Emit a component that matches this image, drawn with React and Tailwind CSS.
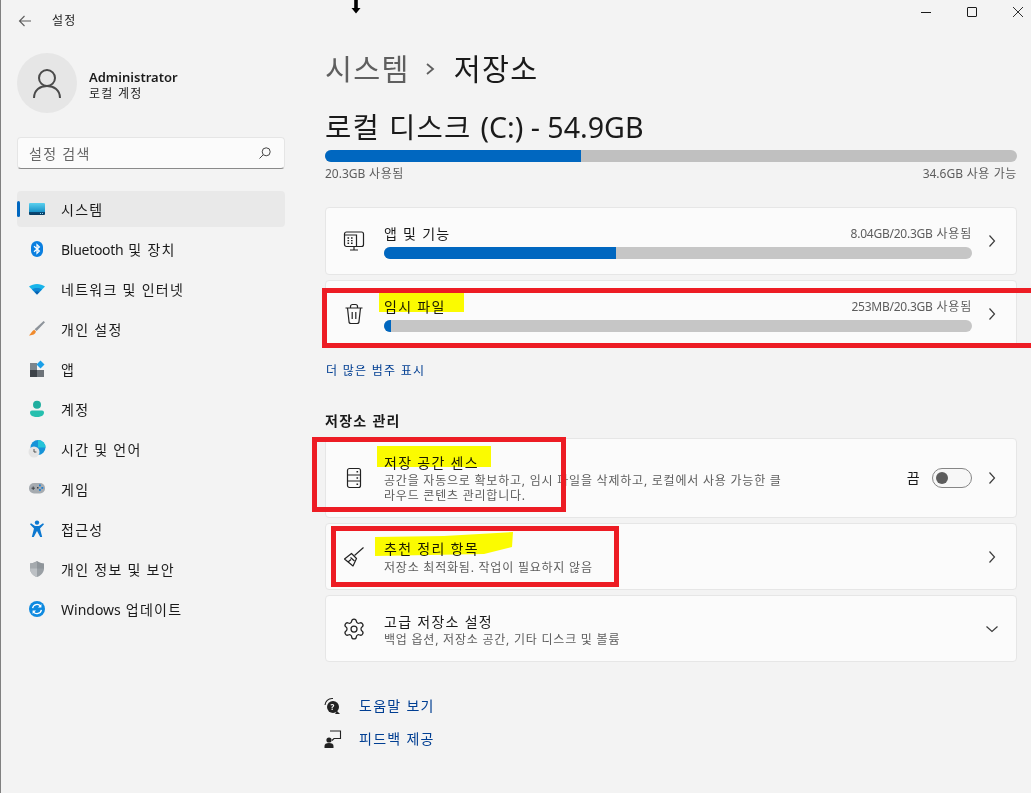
import React from 'react';
import { Settings } from 'lucide-react';

const Lat = ({ children, className = 'tracking-normal' }) => <span className={className}>{children}</span>;

const Chevron = ({ down }) => (
  <svg width="16" height="16" viewBox="0 0 16 16" fill="none" stroke="#3c3c3c" strokeWidth="1.2">
    {down ? <path d="M2.5 5.5 8 10.5l5.5-5" /> : <path d="M5.5 2.5 10.5 8l-5 5.5" />}
  </svg>
);

const SystemIcon = () => (
  <svg width="18" height="18" viewBox="0 0 18 18">
    <defs>
      <linearGradient id="sys" x1="0" y1="0" x2="0" y2="1">
        <stop offset="0" stopColor="#5ad0ee" />
        <stop offset="0.72" stopColor="#1a93c9" />
        <stop offset="0.73" stopColor="#0b4a78" />
        <stop offset="1" stopColor="#083a60" />
      </linearGradient>
    </defs>
    <rect x="1" y="3" width="16" height="12" rx="1" fill="url(#sys)" />
    <rect x="12" y="13" width="1" height="1" fill="#8fd8f0" />
    <rect x="14" y="13" width="1" height="1" fill="#8fd8f0" />
  </svg>
);

const BluetoothIcon = () => (
  <svg width="18" height="18" viewBox="0 0 18 18">
    <rect x="3" y="1" width="12" height="16" rx="6" fill="#0a7fe0" />
    <path d="M6 6.2 11.4 11 9 13.4V4.6L11.4 7 6 11.8" fill="none" stroke="#fff" strokeWidth="1.2" />
  </svg>
);

const WifiIcon = () => (
  <svg width="18" height="18" viewBox="0 0 18 18">
    <path d="M1 6.5C5.5 3 12.5 3 17 6.5L9 14.5Z" fill="#18b4ea" />
    <path d="M4 9.5C7 7.6 11 7.6 14 9.5L9 14.5Z" fill="#0e86d4" />
    <path d="M6.6 12C8 11.1 10 11.1 11.4 12L9 14.5Z" fill="#0b5fae" />
  </svg>
);

const BrushIcon = () => (
  <svg width="18" height="18" viewBox="0 0 18 18">
    <path d="M15.6 1 17 2.2 8.6 11 6.6 9.2Z" fill="#8d939a" />
    <path d="M6.2 9.8 8 11.6C7.4 14.4 4.4 15.6 1 15.4 3 14 3.6 11 6.2 9.8Z" fill="#f08a2c" />
  </svg>
);

const AppsIcon = () => (
  <svg width="18" height="18" viewBox="0 0 18 18">
    <rect x="2" y="3" width="7" height="7" fill="#7d858c" />
    <rect x="2" y="10" width="7" height="7" fill="#3d4248" />
    <rect x="9" y="10" width="7" height="7" fill="#6c7278" />
    <path d="M12.5 0.5 16.5 4.5 12.5 8.5 8.5 4.5Z" fill="#1a9fe8" />
  </svg>
);

const AccountIcon = () => (
  <svg width="18" height="18" viewBox="0 0 18 18">
    <circle cx="9" cy="4.8" r="4" fill="#1fae9f" />
    <path d="M2 12.5A2 2 0 0 1 4 10.5H14A2 2 0 0 1 16 12.5C16 15.5 13 17 9 17S2 15.5 2 12.5Z" fill="#26bfae" />
  </svg>
);

const TimeIcon = () => (
  <svg width="18" height="18" viewBox="0 0 18 18">
    <circle cx="10" cy="7.5" r="7.5" fill="#1593d8" />
    <path d="M10 0A7.5 7.5 0 0 1 17.5 7.5H10Z" fill="#25c4d8" />
    <circle cx="6" cy="12" r="5.5" fill="#e4e4e4" />
    <path d="M6 9v3h2.4" fill="none" stroke="#444" strokeWidth="0.9" />
  </svg>
);

const GameIcon = () => (
  <svg width="18" height="18" viewBox="0 0 18 18">
    <rect x="1" y="3" width="16" height="10.5" rx="5" fill="#a6abb0" />
    <path d="M3.5 8.2h3.4M5.2 6.5v3.4" stroke="#3d4248" strokeWidth="1" />
    <rect x="11" y="4.5" width="1.8" height="1.8" fill="#1a7fd4" />
    <rect x="13.4" y="7" width="1.8" height="1.8" fill="#1a7fd4" />
    <rect x="11" y="9" width="1.8" height="1.8" fill="#1a7fd4" />
    <rect x="9" y="7" width="1.5" height="1.5" fill="#3d4248" />
  </svg>
);

const AccessIcon = () => (
  <svg width="18" height="18" viewBox="0 0 18 18" fill="#0c78d0">
    <circle cx="9" cy="2.6" r="2.2" />
    <path d="M2 4.2 3 3.2 7 6H11L15 3.2 16 4.2 12 8.6 14.2 17H12.2L9 11 5.8 17H3.8L6 8.6Z" />
  </svg>
);

const ShieldIcon = () => (
  <svg width="18" height="18" viewBox="0 0 18 18">
    <path d="M9 1C11 2.6 13.6 3.4 16 3.4V8.5C16 12.6 13 15.6 9 17 5 15.6 2 12.6 2 8.5V3.4C4.4 3.4 7 2.6 9 1Z" fill="#9aa0a5" />
    <path d="M9 1V17C5 15.6 2 12.6 2 8.5V3.4C4.4 3.4 7 2.6 9 1Z" fill="#bcc0c4" />
    <path d="M9 1C11 2.6 13.6 3.4 16 3.4V8.5H2V3.4C4.4 3.4 7 2.6 9 1Z" fill="#7b8187" fillOpacity="0.35" />
  </svg>
);

const UpdateIcon = () => (
  <svg width="18" height="18" viewBox="0 0 18 18">
    <circle cx="9" cy="9" r="8" fill="#0f8ae0" />
    <path d="M4.6 8.2A4.5 4.5 0 0 1 12.6 6.2M13.4 9.8A4.5 4.5 0 0 1 5.4 11.8" fill="none" stroke="#fff" strokeWidth="1.3" />
    <path d="M13.4 4V7.4H10ZM4.6 14V10.6H8Z" fill="#fff" />
  </svg>
);

const navItems = [
  { label: <>시스템</>, icon: <SystemIcon />, active: true },
  { label: <><Lat className="tracking-[-0.02em]">Bluetooth</Lat> 및 장치</>, icon: <BluetoothIcon /> },
  { label: <>네트워크 및 인터넷</>, icon: <WifiIcon /> },
  { label: <>개인 설정</>, icon: <BrushIcon /> },
  { label: <>앱</>, icon: <AppsIcon /> },
  { label: <>계정</>, icon: <AccountIcon /> },
  { label: <>시간 및 언어</>, icon: <TimeIcon /> },
  { label: <>게임</>, icon: <GameIcon /> },
  { label: <>접근성</>, icon: <AccessIcon /> },
  { label: <>개인 정보 및 보안</>, icon: <ShieldIcon /> },
  { label: <><Lat>Windows</Lat> 업데이트</>, icon: <UpdateIcon /> },
];

const Sidebar = () => (
  <aside className="w-[324px] shrink-0 pl-4">
    <div className="flex h-10 items-center pt-[1px]">
      <svg width="16" height="16" viewBox="0 0 16 16" fill="none" stroke="#5c5c5c" strokeWidth="1.1">
        <path d="M14 8H2.5M7.5 3 2.5 8l5 5" />
      </svg>
      <span className="ml-[19px] text-xs text-[#1a1a1a]">설정</span>
    </div>
    <div className="mt-[13px] flex h-[60px] items-center">
      <div className="flex h-[60px] w-[60px] items-center justify-center rounded-full bg-[#e6e6e6]">
        <svg width="30" height="32" viewBox="0 0 30 32" fill="none" stroke="#4a4a4a" strokeWidth="2">
          <circle cx="15" cy="11" r="8" />
          <path d="M2 31C2 23 8 19 15 19S28 23 28 31" />
        </svg>
      </div>
      <div className="ml-3 flex flex-col pt-[3px]">
        <span className="text-[13px] leading-[17px] font-semibold tracking-normal text-[#1a1a1a]">Administrator</span>
        <span className="mt-px text-xs leading-[14px] text-[#1a1a1a]">로컬 계정</span>
      </div>
    </div>
    <div className="mt-6 flex h-8 w-[268px] items-center justify-between rounded border border-[#e5e5e5] border-b-[#8a8a8a] bg-[#fbfbfb] pr-3 pl-[11px] text-sm text-[#666666]">
      <span className="pt-px">설정 검색</span>
      <svg width="14" height="14" viewBox="0 0 14 14" fill="none" stroke="#444" strokeWidth="1">
        <circle cx="8.2" cy="5.8" r="4" />
        <path d="M5.2 8.8 1.5 12.5" />
      </svg>
    </div>
    <nav className="mt-[22px] flex w-[268px] flex-col gap-1">
      {navItems.map((item, i) => (
        <div
          key={i}
          className={`relative flex h-9 items-center rounded pl-[11px] text-sm text-[#1a1a1a] ${item.active ? 'bg-[#e9e9e9]' : ''}`}
        >
          {item.active && <span className="absolute top-[10px] left-0 h-4 w-[3px] rounded-full bg-[#0067c0]" />}
          {item.icon}
          <span className="mt-[2px] ml-[15px]">{item.label}</span>
        </div>
      ))}
    </nav>
  </aside>
);

const UsageBar = ({ width, track = 'bg-[#c6c6c6]' }) => (
  <div className={`h-3 ${track} overflow-hidden rounded-full`}>
    <div className="h-full bg-[#0067c0]" style={{ width }} />
  </div>
);

const Card = ({ className = '', children }) => (
  <div className={`flex items-center rounded border border-[#e6e6e6] bg-[#fbfbfb] ${className}`}>{children}</div>
);

const CardIcon = ({ children }) => <div className="flex w-[58px] shrink-0 justify-center pr-[2px]">{children}</div>;

const ChevronCell = ({ down }) => <div className="flex w-[44px] shrink-0 justify-center pr-[5px]"><Chevron down={down} /></div>;

const UsageCard = ({ icon, title, usage, width }) => (
  <Card className="h-[68px]">
    <CardIcon>{icon}</CardIcon>
    <div className="flex-1">
      <div className="flex h-5 items-center justify-between">
        <span className="text-sm text-[#1a1a1a]">{title}</span>
        <span className="text-xs tracking-[0.065em] text-[#5d5d5d]">{usage}</span>
      </div>
      <div className="mt-[3px]"><UsageBar width={width} /></div>
    </div>
    <ChevronCell />
  </Card>
);

const InfoCard = ({ icon, title, desc, h = 'h-[67px]', right, down, titleGap = '', pad = '' }) => (
  <Card className={h}>
    <CardIcon>{icon}</CardIcon>
    <div className={`flex-1 ${pad}`}>
      <div className={`text-sm leading-5 text-[#1a1a1a] ${titleGap}`}>{title}</div>
      <div className="text-xs leading-[15px] tracking-[0.065em] text-[#5d5d5d]">{desc}</div>
    </div>
    {right}
    <ChevronCell down={down} />
  </Card>
);

const Main = () => (
  <main className="flex-1 pr-[14px]">
    <div className="-mr-[6px] flex h-6 items-center justify-end gap-[36px]">
      <span className="h-px w-[10px] bg-[#1a1a1a]" />
      <span className="h-[10px] w-[10px] rounded-[1px] border border-[#1a1a1a]" />
      <svg width="10" height="10" viewBox="0 0 10 10" fill="none" stroke="#1a1a1a" strokeWidth="0.9" className="shrink-0"><path d="M0 0 10 10M10 0 0 10" /></svg>
    </div>
    <div className="mt-6 flex h-10 items-center pt-px text-[29.3px] leading-10">
      <span className="text-[#5f5f5f]">시스템</span>
      <svg width="12" height="16" viewBox="0 0 12 16" fill="none" stroke="#5f5f5f" strokeWidth="1.8" className="mr-[18px] ml-[14px]"><path d="M3 3l6 5-6 5" /></svg>
      <span className="text-[#1a1a1a]">저장소</span>
    </div>
    <h1 className="mt-5 h-[38px] text-[28.6px] leading-[38px] font-normal text-[#1a1a1a]">로컬 디스크 <Lat>(C:) - 54.9GB</Lat></h1>
    <div className="mt-1"><UsageBar width="37%" track="bg-[#c0c0c0]" /></div>
    <div className="mt-1 flex justify-between text-xs leading-[15px] tracking-[0.05em] text-[#5d5d5d]">
      <span><Lat>20.3GB</Lat> 사용됨</span>
      <span><Lat>34.6GB</Lat> 사용 가능</span>
    </div>
    <div className="mt-[26px] flex flex-col gap-[5px]">
      <UsageCard
        title="앱 및 기능"
        usage={<><Lat className="tracking-[-0.02em]">8.04GB/20.3GB</Lat> 사용됨</>}
        width="39.5%"
        icon={
          <svg width="22" height="22" viewBox="0 0 22 22" fill="none" stroke="#222" strokeWidth="1.2">
            <rect x="1.5" y="2" width="19" height="14.5" rx="2" />
            <path d="M1.5 5H13.5V16.5" />
            <path d="M7 20H15M11 16.5V20" />
            <path d="M4.5 8h1.6M8 8h1.6M4.5 10.6h1.6M8 10.6h1.6M4.5 13.2h1.6M8 13.2h1.6" strokeWidth="1.4" />
          </svg>
        }
      />
      <UsageCard
        title="임시 파일"
        usage={<><Lat className="tracking-[-0.02em]">253MB/20.3GB</Lat> 사용됨</>}
        width="1.2%"
        icon={
          <svg width="20" height="22" viewBox="0 0 20 22" fill="none" stroke="#222" strokeWidth="1.2">
            <path d="M1.5 5H18.5M6.5 5V3.5A2 2 0 0 1 8.5 1.5H11.5A2 2 0 0 1 13.5 3.5V5" />
            <path d="M3.5 5 5 18.5A2 2 0 0 0 7 20.5H13A2 2 0 0 0 15 18.5L16.5 5" />
            <path d="M8.2 9V16M11.8 9V16" />
          </svg>
        }
      />
    </div>
    <div className="mt-[15px] pl-px text-xs leading-4 text-[#003e92]">더 많은 범주 표시</div>
    <h2 className="mt-[32px] text-sm leading-5 font-semibold text-[#1a1a1a]">저장소 관리</h2>
    <div className="mt-[7px] flex flex-col gap-[5px]">
      <InfoCard
        h="h-[80px]"
        title="저장 공간 센스"
        desc={<>공간을 자동으로 확보하고, 임시 파일을 삭제하고, 로컬에서 사용 가능한 클<br />라우드 콘텐츠 관리합니다.</>}
        icon={
          <svg width="16" height="22" viewBox="0 0 16 22" fill="none" stroke="#222" strokeWidth="1.2">
            <rect x="1.5" y="1.5" width="13" height="19" rx="2" />
            <path d="M1.5 8H14.5M1.5 14H14.5" />
            <path d="M10.5 4.8h1.6M10.5 11h1.6M10.5 17.2h1.6" strokeWidth="1.4" />
          </svg>
        }
        right={
          <div className="flex items-center">
            <span className="mr-[11px] text-sm text-[#1a1a1a]">끔</span>
            <div className="flex h-5 w-10 items-center rounded-full border border-[#868686] bg-[#f7f7f7] pl-[3px]">
              <span className="h-3 w-3 rounded-full bg-[#5d5d5d]" />
            </div>
          </div>
        }
      />
      <InfoCard
        titleGap="mb-px"
        title="추천 정리 항목"
        desc="저장소 최적화됨. 작업이 필요하지 않음"
        icon={
          <svg width="20" height="20" viewBox="0 0 20 20" fill="none" stroke="#222" strokeWidth="1.2" strokeLinejoin="round">
            <path d="M19.5 0.5 10.5 8.5" />
            <path d="M7.5 6.5 12.5 11.5 9 19 0.5 12Z" />
            <path d="M4 15 7 12.5M6.5 10.5 10.5 14" />
          </svg>
        }
      />
      <InfoCard
        down
        pad="pt-[2px]"
        title="고급 저장소 설정"
        desc="백업 옵션, 저장소 공간, 기타 디스크 및 볼륨"
        icon={<Settings size={24} strokeWidth={1.25} color="#222" />}
      />
    </div>
    <div className="mt-[34px] flex flex-col gap-[13px] text-sm leading-5 text-[#003e92]">
      <div className="flex items-center">
        <svg width="20" height="20" viewBox="0 0 20 20" className="mr-[16px] -ml-[2px]">
          <path d="M2 9A7 7 0 0 1 9 2.5H10" fill="none" stroke="#222" strokeWidth="1.1" />
          <circle cx="10" cy="11" r="6" fill="#222" />
          <path d="M14 15 17 18H12Z" fill="#222" />
          <text x="10" y="14" textAnchor="middle" fontSize="8" fontWeight="700" fill="#fff">?</text>
        </svg>
        <span>도움말 보기</span>
      </div>
      <div className="flex items-center">
        <svg width="20" height="20" viewBox="0 0 20 20" className="mr-[16px] -ml-[2px]">
          <path d="M7 2H17.5V9.5H11L9 11.5" fill="none" stroke="#222" strokeWidth="1.1" />
          <circle cx="6" cy="11" r="2.6" fill="#222" />
          <path d="M1.5 19V17C1.5 15 3 14 6 14S10.5 15 10.5 17V19Z" fill="#222" />
        </svg>
        <span>피드백 제공</span>
      </div>
    </div>
  </main>
);

// screenshot markup drawn over the page
const Annotations = () => (
  <>
    <div className="absolute top-[288px] left-[321px] h-[60px] w-[720px] border-[5px] border-[#ed1c24]" />
    <div className="absolute top-[437px] left-[311px] h-[75px] w-[254px] border-[5px] border-[#ed1c24]" />
    <div className="absolute top-[526px] left-[330px] h-[61px] w-[288px] border-[5px] border-[#ed1c24]" />
    <div className="absolute top-[293px] left-[378px] h-[19px] w-[85px] bg-[#ffff00] mix-blend-multiply" />
    <div className="absolute top-[446px] left-[376px] h-[21px] w-[114px] bg-[#ffff00] mix-blend-multiply" />
    <svg width="141" height="26" viewBox="0 0 141 26" className="absolute top-[531px] left-[373px] mix-blend-multiply">
      <path d="M1 6 70 5 139 1 138 16 110 23 1 25Z" fill="#ffff00" />
    </svg>
    <svg width="10" height="14" viewBox="0 0 10 14" className="absolute top-0 left-[350px]">
      <path d="M3.2 0H6.8V8H9.5L5 13.5 0.5 8H3.2Z" fill="#000" />
    </svg>
  </>
);

export default function App() {
  return (
    <div className="relative flex h-[793px] w-[1031px] overflow-hidden border-l border-[#808080] bg-[#f3f3f3] tracking-[0.08em] [font-family:'Noto_Sans','Noto_Sans_CJK_KR',sans-serif]">
      <Sidebar />
      <Main />
      <Annotations />
    </div>
  );
}
